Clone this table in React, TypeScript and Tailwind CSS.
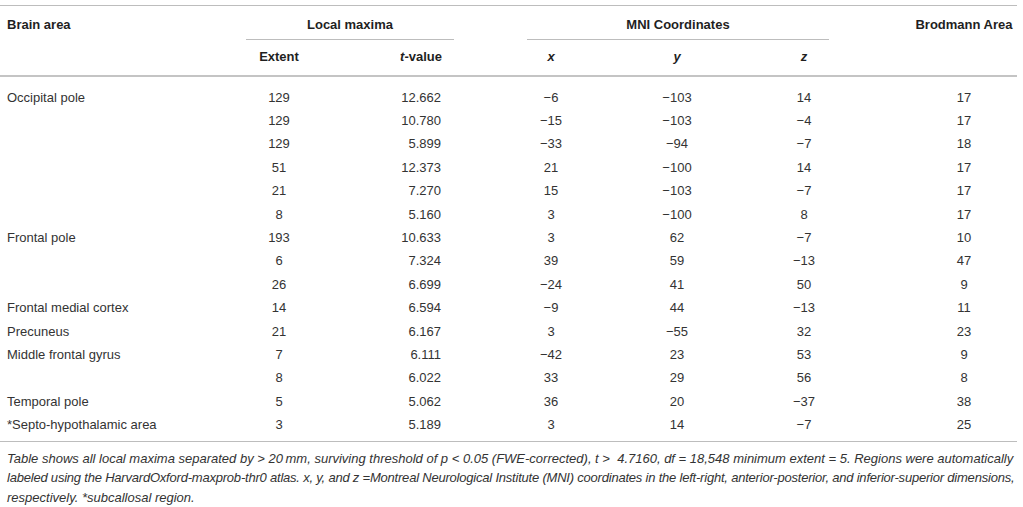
import React from "react";

const rows: [string, string, string, string, string, string, string][] = [
  ["Occipital pole", "129", "12.662", "−6", "−103", "14", "17"],
  ["", "129", "10.780", "−15", "−103", "−4", "17"],
  ["", "129", "5.899", "−33", "−94", "−7", "18"],
  ["", "51", "12.373", "21", "−100", "14", "17"],
  ["", "21", "7.270", "15", "−103", "−7", "17"],
  ["", "8", "5.160", "3", "−100", "8", "17"],
  ["Frontal pole", "193", "10.633", "3", "62", "−7", "10"],
  ["", "6", "7.324", "39", "59", "−13", "47"],
  ["", "26", "6.699", "−24", "41", "50", "9"],
  ["Frontal medial cortex", "14", "6.594", "−9", "44", "−13", "11"],
  ["Precuneus", "21", "6.167", "3", "−55", "32", "23"],
  ["Middle frontal gyrus", "7", "6.111", "−42", "23", "53", "9"],
  ["", "8", "6.022", "33", "29", "56", "8"],
  ["Temporal pole", "5", "5.062", "36", "20", "−37", "38"],
  ["*Septo-hypothalamic area", "3", "5.189", "3", "14", "−7", "25"],
];

const GRID =
  "grid grid-cols-[246px_66px_142px_73px_48px_204px_50px_82px_106px]";

export default function App() {
  return (
    <div
      className="w-[1023px] h-[507px] bg-white overflow-hidden text-[#333] pt-[5px]"
      style={{ fontFamily: '"Liberation Sans", Arial, sans-serif' }}
    >
      <div className="w-[1017px]">
        <div className="h-px bg-[#bdbdbd]" />
        {/* Header row 1 */}
        <div className={`${GRID} text-[13px] leading-[16px] font-bold text-[#1f1f1f]`}>
          <div className="pl-[7px] pt-[11px]">Brain area</div>
          <div className="col-span-2 flex flex-col">
            <div className="pt-[11px] pb-[6px] text-center">Local maxima</div>
            <div className="h-px bg-[#bdbdbd]" />
          </div>
          <div />
          <div className="col-span-3 flex flex-col">
            <div className="pt-[11px] pb-[6px] text-center">MNI Coordinates</div>
            <div className="h-px bg-[#bdbdbd]" />
          </div>
          <div />
          <div className="pt-[11px] text-center whitespace-nowrap">Brodmann Area</div>
        </div>
        {/* Header row 2 */}
        <div
          className={`${GRID} text-[13px] leading-[16px] font-bold text-[#1f1f1f] pt-[9px] pb-[10px]`}
        >
          <div />
          <div className="text-center">Extent</div>
          <div className="text-right pr-[12px]">
            <i>t</i>-value
          </div>
          <div />
          <div className="text-center italic">x</div>
          <div className="text-center italic">y</div>
          <div className="text-center italic">z</div>
          <div />
          <div />
        </div>
        <div className="h-[2px] bg-[#c4c4c4]" />
        {/* Data */}
        <div className="pt-[9px] pb-[4px] text-[13px]">
          {rows.map((r, i) => (
            <div key={i} className={`${GRID} h-[23.4px] items-center leading-[16px]`}>
              <div className="pl-[7px] whitespace-nowrap">{r[0]}</div>
              <div className="text-center">{r[1]}</div>
              <div className="text-right pr-[13px]">{r[2]}</div>
              <div />
              <div className="text-center">{r[3]}</div>
              <div className="text-center">{r[4]}</div>
              <div className="text-center">{r[5]}</div>
              <div />
              <div className="text-center">{r[6]}</div>
            </div>
          ))}
        </div>
        <div className="h-px bg-[#bdbdbd]" />
        {/* Caption */}
        <div className="pt-[7px] pl-[7px] text-[13px] leading-[19.5px] italic text-[#333]">
          <div className="whitespace-nowrap">
            Table shows all local maxima separated by &gt; 20{"\u2009"}mm, surviving threshold of p &lt; 0.05 (FWE-corrected), t &gt;{"\u00a0\u00a0"}4.7160, df = 18,548 minimum extent = 5. Regions were automatically
          </div>
          <div className="whitespace-nowrap tracking-[-0.21px]">
            labeled using the HarvardOxford-maxprob-thr0 atlas. x, y, and z =Montreal Neurological Institute (MNI) coordinates in the left-right, anterior-posterior, and inferior-superior dimensions,
          </div>
          <div className="whitespace-nowrap">respectively. *subcallosal region.</div>
        </div>
      </div>
    </div>
  );
}
